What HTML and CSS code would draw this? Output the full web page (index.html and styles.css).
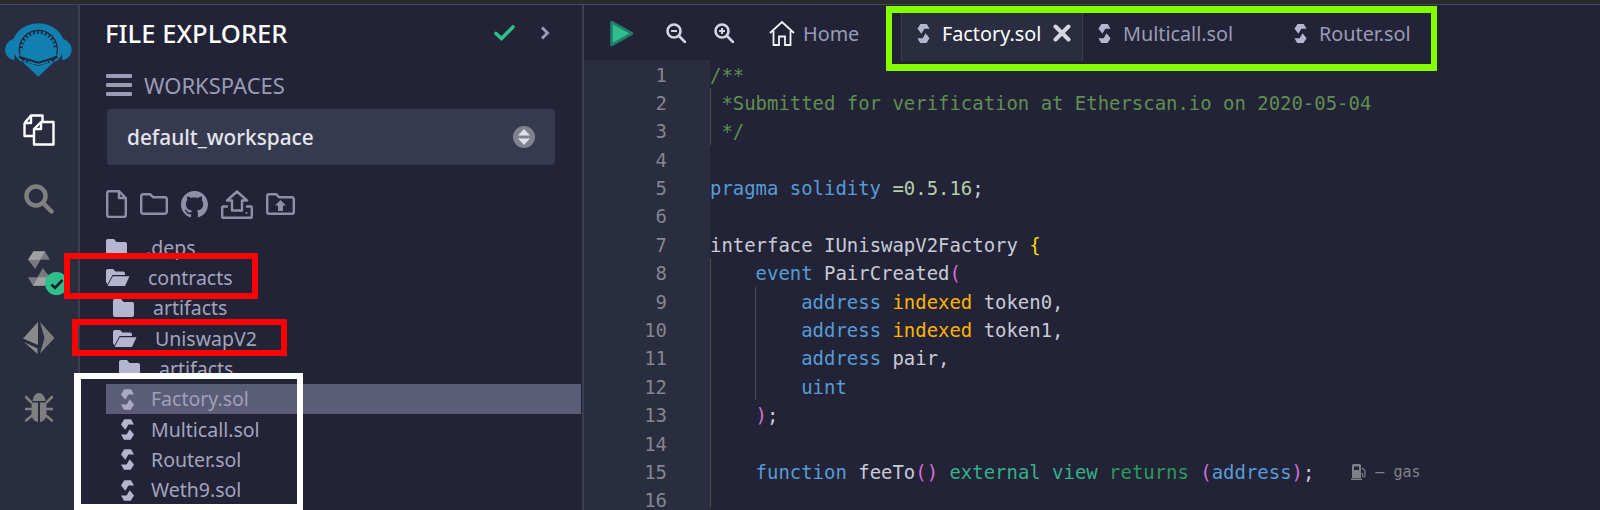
FILE: index.html
```html
<!DOCTYPE html>
<html lang="en">
<head>
<meta charset="utf-8">
<title>Remix IDE</title>
<link rel="stylesheet" href="styles.css">
</head>
<body>
<svg class="defs" width="0" height="0" aria-hidden="true">
  <defs>
    <symbol id="sol" viewBox="0 0 14 22">
      <path d="M3.500 0H10.800L14 5.500H8L4.600 11.300 0 5.500Z"/>
      <path d="M10.500 22H3.200L0 16.500H6L9.400 10.700 14 16.500Z"/>
    </symbol>
    <symbol id="sol-shaded" viewBox="0 0 14 22">
      <path d="M3.500 0H10.800L14 5.500H8L4.600 11.300 0 5.500Z" opacity=".62"/>
      <path d="M3.500 0H10.800L7.600 5.500H0Z" opacity=".85"/>
      <path d="M10.500 22H3.200L0 16.500H6L9.400 10.700 14 16.500Z" opacity=".62"/>
      <path d="M10.500 22H3.200L6.400 16.500H14Z" opacity=".85"/>
    </symbol>
    <symbol id="folder" viewBox="0 0 21 18">
      <path d="M2 0H8L10.500 3H19a2 2 0 0 1 2 2V16a2 2 0 0 1-2 2H2a2 2 0 0 1-2-2V2a2 2 0 0 1 2-2Z"/>
    </symbol>
    <symbol id="open" viewBox="0 0 24 17">
      <path d="M2 0H7L9.500 2.500H17a2 2 0 0 1 2 2V6H6.500L1.500 15.500 0 13V2a2 2 0 0 1 2-2Z"/>
      <path d="M6.800 7.200H23.500L19 17H1.600Z"/>
    </symbol>
  </defs>
</svg>
<div class="topbar"></div>
<div class="app">
  <nav class="rail">
    <div class="rail-logo">
      <svg width="80" height="80" viewBox="0 0 240 240">
        <ellipse cx="118" cy="106" rx="78" ry="66" fill="#117fb0"/>
        <circle cx="118" cy="118" r="59" fill="#23253a"/>
        <circle cx="118" cy="118" r="47" fill="#117fb0"/>
        <circle cx="118" cy="118" r="51" fill="none" stroke="#117fb0" stroke-width="8" stroke-dasharray="7 5"/>
        <path d="M30 146 118 166 206 146V220H30Z" fill="#2a2c3f"/>
        <path d="M64 120H172V138L118 154 64 138Z" fill="#117fb0"/>
        <path d="M60 141 118 158 176 141" fill="none" stroke="#23253a" stroke-width="6"/>
        <path d="M68 153 118 168 168 153 118 200Z" fill="#117fb0"/>
        <path d="M50 84C29 90 18 105 18 120 18 135 30 148 46 151Z" fill="#117fb0"/>
        <path d="M186 84C207 90 218 105 218 120 218 135 206 148 190 151Z" fill="#117fb0"/>
      </svg>
    </div>
    <div class="rail-item">
      <svg width="32" height="32" viewBox="0 0 32 32" fill="none" stroke="#fff" stroke-width="2.400" stroke-linejoin="round">
        <path d="M1.500 9 8 1.500H19.500V8M1.500 9V22H11M8 1.500V9H1.500"/>
        <path d="M11 15 18 8H30.500V30.500H11Z"/>
        <path d="M18 8V15H11"/>
      </svg>
    </div>
    <div class="rail-item">
      <svg width="30" height="30" viewBox="0 0 30 30" fill="none" stroke="#7f7f7f">
        <circle cx="12" cy="12" r="9.500" stroke-width="4.500"/>
        <path d="M19.500 19.500 27.500 27.500" stroke-width="4.500" stroke-linecap="round"/>
      </svg>
    </div>
    <div class="rail-item rail-sol">
      <svg class="sol-big" width="22" height="35"><use href="#sol-shaded"/></svg>
      <span class="badge">
        <svg width="14" height="12" viewBox="0 0 14 12" fill="none" stroke="#1d2030" stroke-width="2.600"><path d="M1.500 6.500 5 10 12.500 2"/></svg>
      </span>
    </div>
    <div class="rail-item">
      <svg width="32" height="32" viewBox="0 0 32 32" fill="#7f7f7f">
        <path d="M15 0V23L0 16.500Z" fill="#8a8a8a"/>
        <path d="M1 20 14.500 26.500V32Z" fill="#8a8a8a"/>
        <path d="M17 0 31.500 16 17 31.500 21.500 16Z"/>
      </svg>
    </div>
    <div class="rail-item">
      <svg width="28" height="30" viewBox="0 0 28 30" fill="#7f7f7f">
        <path d="M7.500 8C8 3 11 0 14 0s6 3 6.500 8Z"/>
        <path d="M6.500 9.500H13V29C9 28.500 6.500 25 6.500 21ZM15 9.500H21.500V21C21.500 25 19 28.500 15 29Z"/>
        <path d="M1 4 6 9M27 4 22 9M0 16H6M28 16H22M1 27.500 6.500 23M27 27.500 21.500 23" stroke="#7f7f7f" stroke-width="2.600" stroke-linecap="round"/>
      </svg>
    </div>
  </nav>

  <aside class="sidebar">
    <header class="side-head">
      <h1 class="side-title">FILE EXPLORER</h1>
      <svg class="head-check" width="21" height="16" viewBox="0 0 21 16" fill="none" stroke="#2fbf8a" stroke-width="3.600" stroke-linecap="round"><path d="M2 8.500 7.500 13.500 19 2"/></svg>
      <svg class="head-chev" width="10" height="14" viewBox="0 0 10 14" fill="none" stroke="#9a9bb5" stroke-width="3"><path d="M2 1.500 7.500 7 2 12.500"/></svg>
    </header>
    <div class="ws-row">
      <svg width="26" height="22" viewBox="0 0 26 22" fill="#9a9bb5"><rect width="26" height="4" rx="1"/><rect y="9" width="26" height="4" rx="1"/><rect y="18" width="26" height="4" rx="1"/></svg>
      <span>WORKSPACES</span>
    </div>
    <div class="ws-select">
      <span>default_workspace</span>
      <span class="ws-toggle">
        <svg width="12" height="16" viewBox="0 0 12 16" fill="#e0e1ea"><path d="M6 0 12 6.500H0ZM6 16 0 9.500H12Z"/></svg>
      </span>
    </div>
    <div class="file-tools">
      <svg width="21" height="28" viewBox="0 0 21 28" fill="none" stroke="#8f90a8" stroke-width="2.400" stroke-linejoin="round"><path d="M2.500 1.200H13L19.800 8V25a2 2 0 0 1-2 2H3a2 2 0 0 1-1.800-2V2.500A1.500 1.500 0 0 1 2.500 1.200ZM13 1.200V8H19.800"/></svg>
      <svg width="28" height="22" viewBox="0 0 28 22" fill="none" stroke="#8f90a8" stroke-width="2.400" stroke-linejoin="round"><path d="M3 1.200H10L13 4.200H25a2 2 0 0 1 1.800 2V19a2 2 0 0 1-1.800 1.800H3a2 2 0 0 1-1.800-1.800V3a2 2 0 0 1 1.800-1.800Z"/></svg>
      <svg width="27" height="27" viewBox="0 0 16 16" fill="#8f90a8"><path d="M8 0C3.580 0 0 3.580 0 8c0 3.540 2.290 6.530 5.470 7.590.4.07.55-.17.55-.38 0-.19-.01-.82-.01-1.490-2.010.37-2.530-.49-2.690-.94-.09-.23-.48-.94-.82-1.130-.28-.15-.68-.52-.01-.53.63-.01 1.080.58 1.230.82.72 1.210 1.870.87 2.330.66.07-.52.28-.87.51-1.070-1.780-.2-3.640-.89-3.640-3.950 0-.87.31-1.590.82-2.150-.08-.2-.36-1.020.08-2.120 0 0 .67-.21 2.200.82.64-.18 1.320-.27 2-.27s1.360.09 2 .27c1.530-1.040 2.200-.82 2.200-.82.44 1.100.16 1.920.08 2.120.51.56.82 1.270.82 2.150 0 3.070-1.870 3.750-3.650 3.950.29.25.54.73.54 1.480 0 1.070-.01 1.930-.01 2.200 0 .21.15.46.55.38A8.010 8.010 0 0016 8c0-4.420-3.580-8-8-8z"/></svg>
      <svg width="32" height="29" viewBox="0 0 32 29" fill="none" stroke="#8f90a8" stroke-width="2.400" stroke-linejoin="round"><path d="M16 1.500 26 10.500H21V20.500H11V10.500H6ZM7 16.500H2.200A1 1 0 0 0 1.200 17.500V26.800A1 1 0 0 0 2.200 27.800H29.800A1 1 0 0 0 30.800 26.800V17.500A1 1 0 0 0 29.800 16.500H25"/><circle cx="25.500" cy="23" r="1" fill="#8f90a8" stroke="none"/></svg>
      <svg width="29" height="22" viewBox="0 0 29 22" fill="none" stroke="#8f90a8" stroke-width="2.400" stroke-linejoin="round"><path d="M3 1.200H10L13 4.200H26a1.800 1.800 0 0 1 1.800 2V19a1.800 1.800 0 0 1-1.800 1.800H3a1.800 1.800 0 0 1-1.800-1.800V3a1.800 1.800 0 0 1 1.800-1.800Z"/><path d="M14.500 7 20 12.500H17V18H12V12.500H9Z" fill="#8f90a8" stroke="none"/></svg>
    </div>
    <ul class="tree">
      <li class="row l0"><svg class="ic-folder"><use href="#folder"/></svg><span>.deps</span></li>
      <li class="row l0 wide"><svg class="ic-open"><use href="#open"/></svg><span>contracts</span></li>
      <li class="row l1"><svg class="ic-folder"><use href="#folder"/></svg><span>artifacts</span></li>
      <li class="row l1 wide"><svg class="ic-open"><use href="#open"/></svg><span>UniswapV2</span></li>
      <li class="row l2"><svg class="ic-folder"><use href="#folder"/></svg><span>artifacts</span></li>
      <li class="row file selected"><svg class="ic-sol"><use href="#sol"/></svg><span>Factory.sol</span></li>
      <li class="row file"><svg class="ic-sol"><use href="#sol"/></svg><span>Multicall.sol</span></li>
      <li class="row file"><svg class="ic-sol"><use href="#sol"/></svg><span>Router.sol</span></li>
      <li class="row file"><svg class="ic-sol"><use href="#sol"/></svg><span>Weth9.sol</span></li>
    </ul>
  </aside>

  <main class="editor">
    <div class="tabs">
      <svg class="play" width="24" height="27" viewBox="0 0 24 27"><path d="M1.500 2 22 13.500 1.500 25Z" fill="#2fbf8f" stroke="#1f7f6a" stroke-width="2.600" stroke-linejoin="round"/></svg>
      <svg class="zoom-out" width="20" height="20" viewBox="0 0 20 20" fill="none" stroke="#d5d6e2" stroke-width="2.600"><circle cx="8" cy="8" r="6.500"/><path d="M13 13 19 19" stroke-linecap="round"/><path d="M5 8H11" stroke-width="2"/></svg>
      <svg class="zoom-in" width="20" height="20" viewBox="0 0 20 20" fill="none" stroke="#d5d6e2" stroke-width="2.600"><circle cx="8" cy="8" r="6.500"/><path d="M13 13 19 19" stroke-linecap="round"/><path d="M5 8H11M8 5V11" stroke-width="2"/></svg>
      <div class="tab-home">
        <svg width="26" height="25" viewBox="0 0 26 25" fill="none" stroke="#f2f2f7" stroke-width="1.800"><path d="M1 12 13 1 25 12M4.500 10V24H10V15.500H16V24H21.500V10"/></svg>
        <span>Home</span>
      </div>
      <div class="tab active"><svg class="ic-sol tab-sol"><use href="#sol"/></svg><span>Factory.sol</span>
        <svg class="tab-x" width="18" height="18" viewBox="0 0 18 18" stroke="#d5d6e2" stroke-width="4" stroke-linecap="round"><path d="M2.500 2.500 15.500 15.500M15.500 2.500 2.500 15.500"/></svg>
      </div>
      <div class="tab t-multi"><svg class="ic-sol tab-sol"><use href="#sol"/></svg><span>Multicall.sol</span></div>
      <div class="tab t-router"><svg class="ic-sol tab-sol"><use href="#sol"/></svg><span>Router.sol</span></div>
    </div>
    <div class="code">
      <div class="guide g1"></div>
      <div class="guide g2"></div>
      <div class="guide g3"></div>
      <div class="ln"><i>1</i><pre class="c">/**</pre></div>
      <div class="ln"><i>2</i><pre class="c"> *Submitted for verification at Etherscan.io on 2020-05-04</pre></div>
      <div class="ln"><i>3</i><pre class="c"> */</pre></div>
      <div class="ln"><i>4</i><pre></pre></div>
      <div class="ln"><i>5</i><pre><b class="k">pragma solidity</b> <b class="v">=0.5.16</b>;</pre></div>
      <div class="ln"><i>6</i><pre></pre></div>
      <div class="ln"><i>7</i><pre><b class="k2">interface</b> IUniswapV2Factory <b class="y">{</b></pre></div>
      <div class="ln"><i>8</i><pre>    <b class="k">event</b> PairCreated<b class="p">(</b></pre></div>
      <div class="ln"><i>9</i><pre>        <b class="k">address</b> <b class="o">indexed</b> token0,</pre></div>
      <div class="ln"><i>10</i><pre>        <b class="k">address</b> <b class="o">indexed</b> token1,</pre></div>
      <div class="ln"><i>11</i><pre>        <b class="k">address</b> pair,</pre></div>
      <div class="ln"><i>12</i><pre>        <b class="k">uint</b></pre></div>
      <div class="ln"><i>13</i><pre>    <b class="p">)</b>;</pre></div>
      <div class="ln"><i>14</i><pre></pre></div>
      <div class="ln"><i>15</i><pre>    <b class="k">function</b> feeTo<b class="p">()</b> <b class="g">external view</b> <b class="r">returns</b> <b class="p">(</b><b class="k">address</b><b class="p">)</b>;<span class="gas"><svg width="16" height="16" viewBox="0 0 16 16" fill="#7f8088"><path d="M1 1.500A1.500 1.500 0 0 1 2.500 0H8.500A1.500 1.500 0 0 1 10 1.500V14H1ZM3 2.500V6H8V2.500ZM0 14.500H11V16H0Z"/><path d="M11 4 14 6.500V11.500Q14 13 12.800 13 11.500 13 11.500 11.500V9.500H10.500" fill="none" stroke="#7f8088" stroke-width="1.200"/></svg><span>– gas</span></span></pre></div>
      <div class="ln"><i>16</i><pre></pre></div>
    </div>
  </main>
</div>
<div class="mark red-a"></div>
<div class="mark red-b"></div>
<div class="mark white-a"></div>
<div class="mark green-a"></div>
</body>
</html>
```
FILE: styles.css
```css
* { box-sizing: border-box; }
html, body { margin: 0; padding: 0; height: 510px; overflow: hidden; background: #222336; }
body { font-family: "Noto Sans", sans-serif; position: relative; }
.defs { position: absolute; }
.topbar { height: 5px; background: #2b2b2b; border-bottom: 1px solid #46465a; }
.app { display: flex; height: 505px; }

.rail { width: 80px; flex: none; background: #2a2c3f; border-right: 2px solid #3b3d52; display: flex; flex-direction: column; align-items: center; }
.rail-logo { height: 90px; display: flex; align-items: center; justify-content: center; }
.rail-item { height: 69.500px; flex: none; display: flex; align-items: center; justify-content: center; position: relative; }
.sol-big { fill: #a8a8a8; }
.badge { position: absolute; left: 17px; top: 38px; width: 23px; height: 23px; border-radius: 50%; background: #2fbf8a; display: flex; align-items: center; justify-content: center; }

.sidebar { width: 504px; flex: none; border-right: 2px solid #3b3d52; }
.side-head { display: flex; align-items: center; height: 56px; padding: 0 32px 0 25px; }
.side-title { margin: 0; flex: 1; font-size: 25.600px; font-weight: 500; color: #fff; }
.head-check { margin-right: 25px; }
.ws-row { display: flex; align-items: center; gap: 12px; height: 47px; padding-left: 26px; color: #9a9bb5; font-size: 22px; }
.ws-select { margin: 1px 27px 0 27px; height: 56px; background: #363a4e; border-radius: 3px; display: flex; align-items: center; justify-content: space-between; padding: 0 20px; color: #e4e5ee; font-size: 20.800px; font-weight: 500; }
.ws-toggle { width: 22px; height: 22px; border-radius: 50%; background: #80828f; display: flex; align-items: center; justify-content: center; }
.file-tools { display: flex; align-items: center; gap: 13px; margin-top: 24px; padding-left: 26px; height: 30px; }

.tree { list-style: none; margin: 13.500px 0 0 0; padding: 0; }
.row { height: 30.300px; display: flex; align-items: center; margin-left: 26px; color: #a3a4bd; font-size: 19.500px; line-height: 1; }
.row svg { fill: #b4b5cf; flex: none; }
.ic-folder { width: 21px; height: 18px; margin-right: 19px; }
.ic-open { width: 24px; height: 17px; margin-right: 18px; }
.ic-sol { width: 13px; height: 21px; fill: #b4b5cf; flex: none; }
.l1 { margin-left: 33px; }
.l2 { margin-left: 39px; }
.file { padding-left: 15px; }
.file .ic-sol { margin-right: 17px; }
.selected { background: #5b5c78; margin-right: 1px; }
.selected span { color: #9fa0b8; }
.selected svg { fill: #a9aac0; }

.editor { flex: 1; min-width: 0; }
.tabs { height: 56px; display: flex; align-items: center; color: #9a9bb5; font-size: 19.800px; padding-left: 26px; }
.play { margin-right: 32px; }
.zoom-out { margin-right: 28px; }
.zoom-in { margin-right: 35px; }
.tab-home { display: flex; align-items: center; gap: 8px; width: 132px; }
.tab { height: 55px; display: flex; align-items: center; }
.tab .ic-sol { width: 13px; height: 19px; margin-right: 12px; }
.tab.active { width: 182px; color: #fff; background: #2a2c3f; border-left: 1px solid #3b3d52; border-right: 1px solid #3b3d52; padding-left: 15px; }
.tab-x { margin-left: 12px; }
.t-multi { padding-left: 15px; width: 205px; }
.t-router { padding-left: 6px; }

.code { position: relative; margin-top: -1px; padding-top: 0.500px; background: linear-gradient(#2a2c3f, #2a2c3f) 0 0 / 126px 100% no-repeat; }
.ln { display: flex; height: 28.400px; align-items: center; }
.ln i { flex: none; width: 126px; height: 100%; padding-right: 43px; text-align: right; font: normal 18.940px/28.400px "DejaVu Sans Mono", monospace; color: #85868f; }
.ln pre { margin: 0; font: 18.940px/28.400px "DejaVu Sans Mono", monospace; color: #c9cbd6; }
.ln b { font-weight: 400; }
.c { color: #5f8f52 !important; }
.k { color: #569cd6; }
.k2 { color: #c9cbd6; }
.v { color: #b5cea8; }
.y { color: #ffd700; }
.p { color: #d670d6; }
.o { color: #ffb300; }
.g { color: #35b08a; }
.r { color: #2b9a5c; }
.gas { display: inline-flex; align-items: center; gap: 8px; margin-left: 37px; color: #7f8088; font-size: 15px; vertical-align: -1px; }

.guide { position: absolute; width: 1px; background: #4b4b52; }
.g1 { left: 126px; top: 28px; height: 57px; }
.g2 { left: 126px; top: 198px; height: 250px; }
.g3 { left: 171px; top: 227px; height: 113px; }

.mark { position: absolute; border-style: solid; pointer-events: none; }
.red-a { left: 64px; top: 253px; width: 194px; height: 46px; border-color: #ff0000; border-width: 6px; }
.red-b { left: 72px; top: 319px; width: 215px; height: 37px; border-color: #ff0000; border-width: 6px; }
.white-a { left: 74px; top: 373px; width: 229px; height: 137px; border-color: #ffffff; border-width: 6px 6px 6px 7px; }
.green-a { left: 886px; top: 6px; width: 551px; height: 65px; border-color: #84ff00; border-width: 7px 6px; }
```
